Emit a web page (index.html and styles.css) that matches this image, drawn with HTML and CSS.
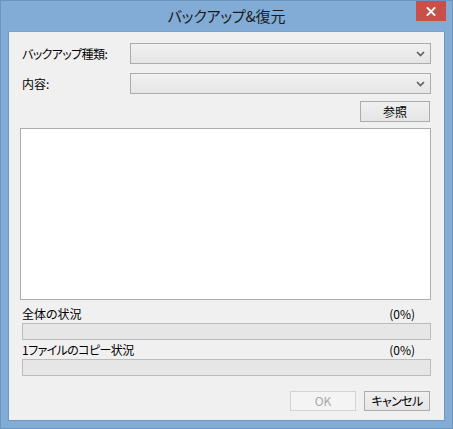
FILE: index.html
```html
<!DOCTYPE html>
<html lang="ja">
<head>
<meta charset="utf-8">
<title>バックアップ&amp;復元</title>
<link rel="stylesheet" href="styles.css">
</head>
<body>
<div class="window">
  <div class="titlebar">
    <span class="spacer"></span>
    <span class="title">バックアップ&amp;復元</span>
    <span class="close">
      <svg width="10" height="9" viewBox="0 0 10 9"><path d="M1.5 1 L8.5 8 M8.5 1 L1.5 8" stroke="#fff" stroke-width="1.8" stroke-linecap="square"/></svg>
    </span>
  </div>
  <div class="client">
    <div class="row">
      <span class="label kana">バックアップ種類:</span>
      <div class="combo"><svg class="chev" width="9" height="6" viewBox="0 0 9 6"><path d="M1 1 L4.5 4.5 L8 1" fill="none" stroke="#606060" stroke-width="1.6"/></svg></div>
    </div>
    <div class="row row2">
      <span class="label">内容:</span>
      <div class="combo"><svg class="chev" width="9" height="6" viewBox="0 0 9 6"><path d="M1 1 L4.5 4.5 L8 1" fill="none" stroke="#606060" stroke-width="1.6"/></svg></div>
    </div>
    <div class="browse-row"><span class="btn browse">参照</span></div>
    <div class="list"></div>
    <div class="status"><span>全体の状況</span><span>(0%)</span></div>
    <div class="bar"></div>
    <div class="status status2"><span class="kana">1ファイルのコピー状況</span><span>(0%)</span></div>
    <div class="bar"></div>
    <div class="actions">
      <span class="btn disabled">OK</span>
      <span class="btn kana">キャンセル</span>
    </div>
  </div>
</div>
</body>
</html>
```
FILE: styles.css
```css
* { box-sizing: border-box; }
html, body { margin: 0; padding: 0; }
body {
  width: 453px;
  height: 429px;
  overflow: hidden;
  font-family: "Noto Sans CJK JP", "Noto Sans", sans-serif;
  font-feature-settings: "palt";
  font-size: 12px;
  color: #000;
}
.window {
  width: 453px;
  height: 429px;
  background: #82acd5;
  border: 1px solid #6d94bd;
  display: flex;
  flex-direction: column;
}
.titlebar {
  height: 30px;
  display: grid;
  grid-template-columns: 1fr auto 1fr;
  align-items: start;
}
.title {
  font-size: 15px;
  line-height: 20px;
  margin-top: 5px;
  color: #1b1b1b;
  letter-spacing: -0.2px;
}
.close {
  justify-self: end;
  width: 30px;
  height: 20px;
  margin-right: 6px;
  background: #c8504b;
  display: flex;
  align-items: center;
  justify-content: center;
}
.client {
  margin: 0 7px 0 7px;
  height: 390px;
  background: #f0f0f0;
  border: 1px solid #6f97c0;
  border-top-color: #7aa3cc;
  padding: 11px 13px 0 11px;
  display: flex;
  flex-direction: column;
}
.kana { letter-spacing: -0.6px; }
.row {
  display: flex;
  align-items: center;
  height: 21px;
}
.row2 { margin-top: 9px; }
.label {
  width: 110px;
  padding-left: 2px;
  white-space: nowrap;
  line-height: 18px;
}
.combo {
  flex: 1;
  height: 21px;
  border: 1px solid #acacac;
  background: linear-gradient(#f1f1f1, #e5e5e5);
  display: flex;
  align-items: center;
  justify-content: flex-end;
  padding-right: 5px;
}
.chev { display: block; }
.browse-row {
  margin-top: 7px;
  display: flex;
  justify-content: flex-end;
  padding-right: 1px;
}
.btn {
  width: 66px;
  height: 21px;
  border: 1px solid #acacac;
  background: linear-gradient(#f0f0f0, #e5e5e5);
  display: flex;
  align-items: center;
  justify-content: center;
  line-height: 18px;
}
.btn.browse { width: 70px; }
.btn.disabled {
  border-color: #d4d4d4;
  background: #f4f4f4;
  color: #a8a8a8;
}
.list {
  margin-top: 6px;
  height: 172px;
  background: #fff;
  border: 1px solid #abadb3;
}
.status {
  height: 23px;
  display: flex;
  align-items: flex-end;
  justify-content: space-between;
  padding: 0 16px 0 2px;
  line-height: 18px;
}
.status2 { height: 19px; }
.bar {
  margin-left: 2px;
  height: 17px;
  background: #e6e6e6;
  border: 1px solid #bcbcbc;
}
.actions {
  margin-top: 15px;
  display: flex;
  justify-content: flex-end;
  gap: 8px;
  padding-right: 1px;
}
.actions .btn { height: 20px; }
```
